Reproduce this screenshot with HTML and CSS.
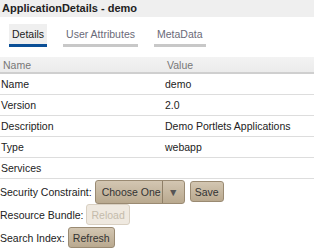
FILE: index.html
```html
<!DOCTYPE html>
<html lang="en">
<head>
    <meta charset="UTF-8">
    <title>ApplicationDetails</title>
    <link rel="stylesheet" href="styles.css">
</head>
<body>
    <div class="title">ApplicationDetails - demo</div>
    <div class="tabs">
        <span class="tab active">Details</span>
        <span class="tab">User Attributes</span>
        <span class="tab">MetaData</span>
    </div>
    <table class="details">
        <tr><th class="col-name">Name</th><th>Value</th></tr>
        <tr><td>Name</td><td class="val">demo</td></tr>
        <tr><td>Version</td><td class="val">2.0</td></tr>
        <tr><td>Description</td><td class="val">Demo Portlets Applications</td></tr>
        <tr><td>Type</td><td class="val">webapp</td></tr>
        <tr><td>Services</td><td class="val"></td></tr>
    </table>
    <div class="line">
        <span class="label">Security Constraint:</span>
        <span class="select"><span class="sel-text">Choose One</span><span class="sel-arrow">&#9660;</span></span>
        <button class="btn">Save</button>
    </div>
    <div class="line">
        <span class="label">Resource Bundle:</span>
        <button class="btn" disabled>Reload</button>
    </div>
    <div class="line">
        <span class="label">Search Index:</span>
        <button class="btn">Refresh</button>
    </div>
</body>
</html>
```
FILE: styles.css
```css
body { margin: 0; font-family: "Liberation Sans", Arial, sans-serif; font-size: 10.5px; color: #222; background: #fff; }

.title { height: 17px; line-height: 17px; padding-left: 2px; background: #efefef; font-weight: bold; font-size: 11px; color: #222; }

/* TABS */
.tabs { display: flex; gap: 16px; padding: 7px 0 0 9px; }
.tab { height: 20px; line-height: 20px; padding: 0 3px; border-bottom: 3px solid #c8c8c8; color: #6a6a78; }
.tab.active { background: #efefef; border-bottom-color: #0b4f96; color: #222; }

/* TABLE */
.details { width: 100%; border-collapse: collapse; margin-top: 10px; }
.details th { height: 15px; padding: 0 0 0 3px; text-align: left; font-weight: normal; color: #777; background: linear-gradient(#f3f3f3, #ebebeb); border-bottom: 2px solid #cfcfcf; }
.details .col-name { width: 161px; }
.details td { height: 20px; padding: 0 0 0 1px; border-bottom: 1px solid #ddd; }
.details td.val { padding-left: 1px; }

/* CONTROLS */
.line { display: flex; align-items: center; gap: 3px; height: 21px; margin-top: 2px; }
.line:first-of-type { margin-top: 3px; }
.label { color: #222; }
.btn { font-family: inherit; font-size: 10.5px; color: #333; height: 21px; padding: 0 4px; border: 1px solid #9a8a72; border-radius: 3px; background: linear-gradient(#d3c6b2, #b9a98f); }
.btn:disabled { color: #c4bbab; border-color: #d9d0c2; background: #efe9e0; }
.select { display: flex; height: 22px; margin-right: 2px; border: 1px solid #9a8a72; border-radius: 3px; background: linear-gradient(#d3c6b2, #b9a98f); color: #333; }
.sel-text { line-height: 22px; padding: 0 0 0 6px; width: 60px; border-right: 1px solid #8f7f67; }
.sel-arrow { width: 21px; line-height: 22px; text-align: center; font-size: 10.5px; color: #555; }
```
